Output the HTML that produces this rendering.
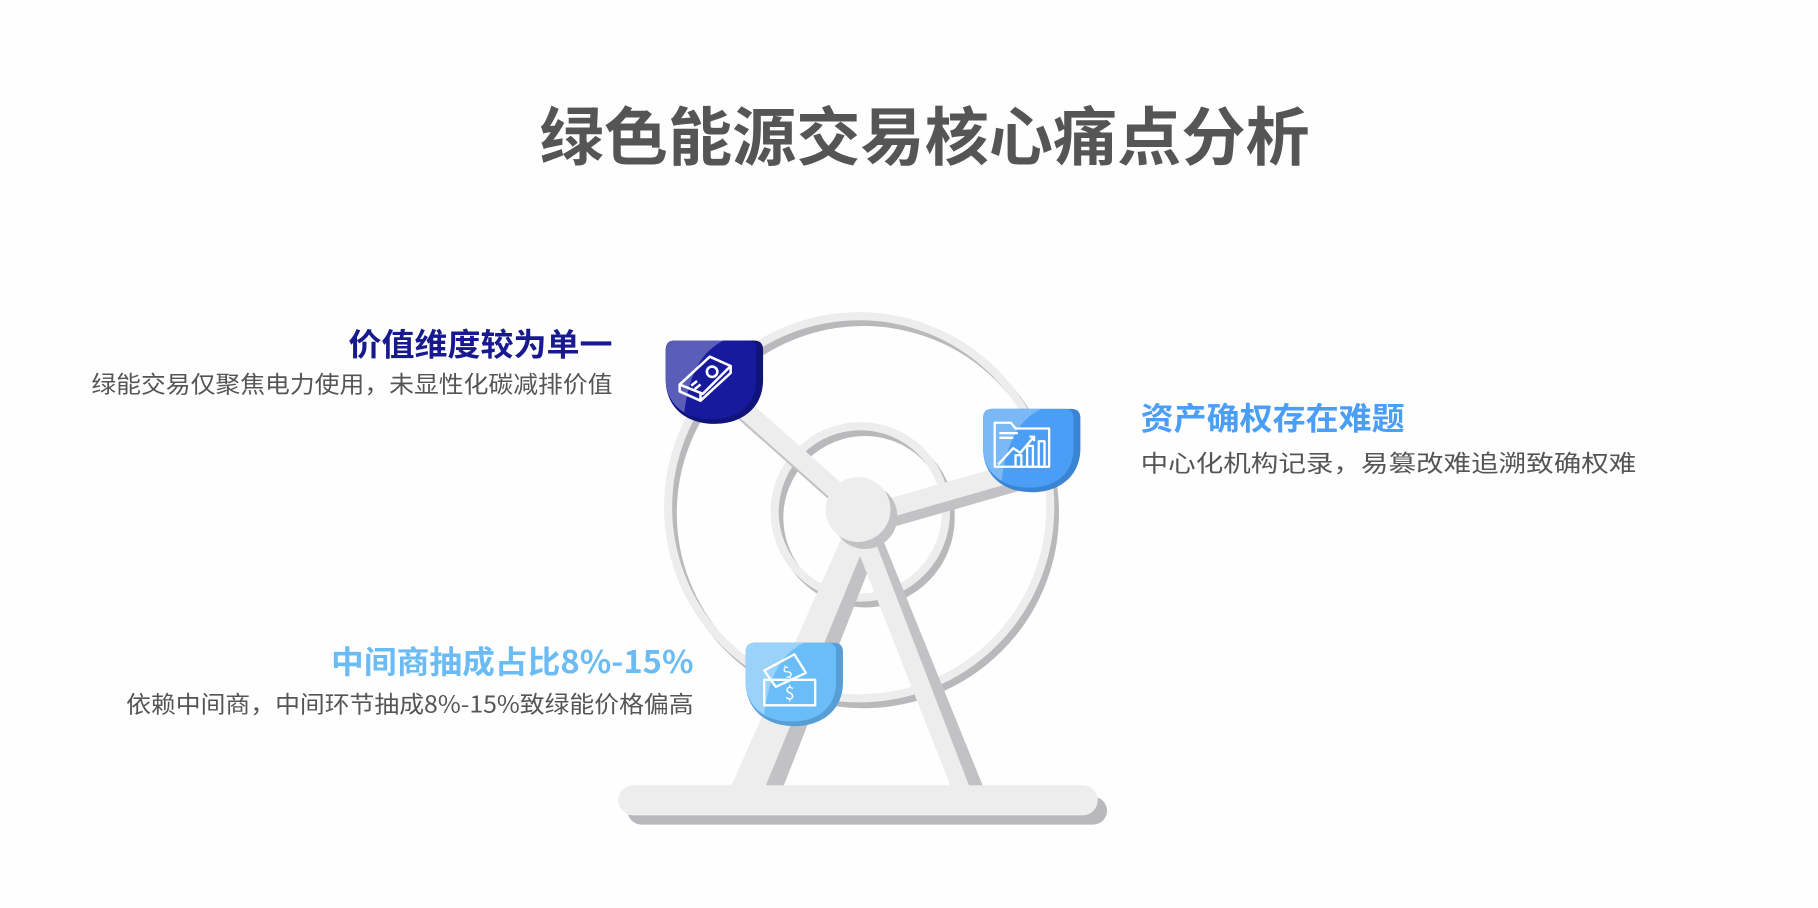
<!DOCTYPE html>
<html><head><meta charset="utf-8"><style>
html,body{margin:0;padding:0;background:#fefefe;width:1818px;height:908px;overflow:hidden}
svg{display:block}
text{font-family:"Noto Sans CJK SC","Liberation Sans",sans-serif}
</style></head><body>
<svg width="1818" height="908" viewBox="0 0 1568 784" xmlns="http://www.w3.org/2000/svg">
<rect width="1568" height="784" fill="#fefefe"/>
<text x="465" y="138" font-size="55" font-weight="bold" fill="#555" textLength="665" lengthAdjust="spacingAndGlyphs">绿色能源交易核心痛点分析</text>

<!-- wheel rings -->
<circle cx="745" cy="443" r="165" fill="none" stroke="#b9b9bb" stroke-width="7"/>
<circle cx="741" cy="438" r="165" fill="none" stroke="#ededed" stroke-width="7"/>
<circle cx="746" cy="447" r="74" fill="none" stroke="#b9b9bb" stroke-width="7"/>
<circle cx="742" cy="442" r="74" fill="none" stroke="#ededed" stroke-width="7"/>

<!-- spokes -->
<line x1="620" y1="334" x2="745" y2="445" stroke="#c2c2c4" stroke-width="16" transform="translate(4,6)"/>
<line x1="620" y1="334" x2="745" y2="445" stroke="#ededed" stroke-width="16"/>
<line x1="745" y1="445" x2="885" y2="405" stroke="#c2c2c4" stroke-width="16" transform="translate(3,8)"/>
<line x1="745" y1="445" x2="885" y2="405" stroke="#ededed" stroke-width="16"/>
<!-- legs -->
<polygon points="730,460 752,460 664,684 636,684" fill="#c2c2c4" transform="translate(8,4)"/>
<polygon points="730,455 752,455 658,684 628,684" fill="#ededed"/>
<polygon points="735,455 755,450 850,684 830,684" fill="#c2c2c4"/>
<polygon points="733,458 750,455 838,684 822,684" fill="#ededed"/>
<!-- hub -->
<circle cx="746" cy="446" r="28" fill="#c2c2c4"/>
<circle cx="740" cy="440" r="28" fill="#ededed"/>
<!-- base -->
<rect x="541" y="688" width="414" height="24" rx="12" fill="#b9b9bb"/>
<rect x="533" y="678" width="414" height="26" rx="13" fill="#ededed"/>

<!-- badge top-left -->
<g transform="translate(574,294)">
<path d="M8 0 H76 Q84 0 84 8 V34 C84 58 66 72 42 72 C18 72 0 58 0 34 V8 Q0 0 8 0Z" fill="#0f137a"/>
<path d="M8 0 H70 Q78 0 78 8 V34 C78 56 62 68 40 68 C16 68 0 56 0 34 V8 Q0 0 8 0Z" fill="#171a9c"/>
<path d="M8 0 H50 C30 10 20 30 16 62 C6 56 0 46 0 34 V8 Q0 0 8 0Z" fill="#5a5eb8"/>
<g fill="none" stroke="#fff" stroke-width="2.2" stroke-linejoin="round">
<path d="M12 38 L38 14 L56 22 L32 46 Z"/><path d="M12 38 V44 L30 52 V46"/><path d="M30 52 L56 28 V22"/>
<circle cx="40" cy="27" r="4.5"/><path d="M22 39 L27 35 M25 42 L30 38"/>
</g></g>

<!-- badge right -->
<g transform="translate(848,353)">
<path d="M8 0 H76 Q84 0 84 8 V34 C84 58 66 72 42 72 C18 72 0 58 0 34 V8 Q0 0 8 0Z" fill="#3a84d6"/>
<path d="M8 0 H70 Q78 0 78 8 V34 C78 56 62 68 40 68 C16 68 0 56 0 34 V8 Q0 0 8 0Z" fill="#4a9ef5"/>
<path d="M8 0 H50 C30 10 20 30 16 62 C6 56 0 46 0 34 V8 Q0 0 8 0Z" fill="#7ab8f6"/>
<g fill="none" stroke="#fff" stroke-width="2" stroke-linejoin="round">
<path d="M10 12 H24 L28 17 H57 V50 H10 Z"/><path d="M14 21 H30 M14 25 H26"/>
<path d="M13 48 L26 34 L32 38 L44 24 M40 24 H44 V28"/>
<rect x="28" y="40" width="5" height="10"/><rect x="38" y="32" width="5" height="18"/><rect x="48" y="28" width="5" height="22"/>
</g></g>

<!-- badge bottom -->
<g transform="translate(643,555)">
<path d="M8 0 H76 Q84 0 84 8 V34 C84 58 66 72 42 72 C18 72 0 58 0 34 V8 Q0 0 8 0Z" fill="#579ed6"/>
<path d="M8 0 H70 Q78 0 78 8 V34 C78 56 62 68 40 68 C16 68 0 56 0 34 V8 Q0 0 8 0Z" fill="#6bbdf8"/>
<path d="M8 0 H50 C30 10 20 30 16 62 C6 56 0 46 0 34 V8 Q0 0 8 0Z" fill="#9ad2fa"/>
<g fill="none" stroke="#fff" stroke-width="2" stroke-linejoin="round">
<path d="M16 24 L42 10 L52 26 L26 38 Z"/>
<rect x="16" y="32" width="44" height="22"/>
</g>
<text x="36" y="30" font-size="13" fill="#fff" text-anchor="middle" transform="rotate(-25 36 25)">$</text>
<text x="38" y="49" font-size="15" fill="#fff" text-anchor="middle">$</text>
</g>

<!-- texts -->
<text x="300" y="307" font-size="27" font-weight="bold" fill="#18198f" textLength="228" lengthAdjust="spacingAndGlyphs">价值维度较为单一</text>
<text x="78" y="339" font-size="20" fill="#555" textLength="450" lengthAdjust="spacingAndGlyphs">绿能交易仅聚焦电力使用，未显性化碳减排价值</text>
<text x="984" y="371" font-size="27" font-weight="bold" fill="#4a9ef5" textLength="228" lengthAdjust="spacingAndGlyphs">资产确权存在难题</text>
<text x="984" y="407" font-size="20" fill="#555" textLength="428" lengthAdjust="spacingAndGlyphs">中心化机构记录，易篡改难追溯致确权难</text>
<text x="285" y="581" font-size="27" font-weight="bold" fill="#6bbcf5" textLength="313" lengthAdjust="spacingAndGlyphs">中间商抽成占比8%-15%</text>
<text x="108" y="615" font-size="20" fill="#555" textLength="490" lengthAdjust="spacingAndGlyphs">依赖中间商，中间环节抽成8%-15%致绿能价格偏高</text>
</svg>
</body></html>
